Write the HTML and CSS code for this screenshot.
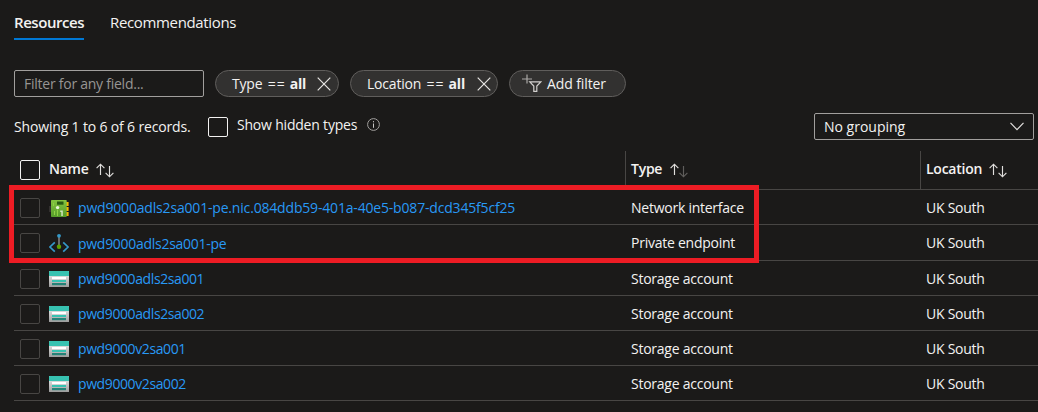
FILE: index.html
```html
<!DOCTYPE html>
<html lang="en">
<head>
<meta charset="utf-8">
<title>Resources</title>
<link rel="stylesheet" href="styles.css">
</head>
<body>
<svg class="defs" width="0" height="0">
  <defs>
    <linearGradient id="sheet" x1="0" y1="0" x2="0" y2="1"><stop offset="0" stop-color="#f4f4f4"/><stop offset="1" stop-color="#9d9d9d"/></linearGradient>
    <linearGradient id="board" x1="0" y1="0" x2="0" y2="1"><stop offset="0" stop-color="#84c440"/><stop offset="1" stop-color="#559c2a"/></linearGradient>
  </defs>
  <symbol id="storage" viewBox="0 0 20 20">
    <rect x="0" y="2" width="20" height="16" rx=".6" fill="url(#sheet)"/>
    <rect x="0" y="2" width="20" height="5" rx=".6" fill="#37c2b1"/>
    <rect x="3" y="8" width="14" height="2.2" fill="#fff"/>
    <rect x="3" y="11" width="14" height="2" fill="#37c2b1"/>
    <rect x="3" y="14" width="14" height="2.2" fill="#258277"/>
  </symbol>
  <symbol id="nic" viewBox="0 0 20 20">
    <path d="M0 8h2v6H0z" fill="#33302f"/>
    <path d="M17 4h2.6v4H17zM17 9h2.6v4H17zM17 14h2.6v4H17z" fill="#f5b800"/>
    <rect x="2" y="2" width="15.7" height="17" rx=".7" fill="url(#board)"/>
    <rect x="8" y="3.5" width="6.5" height="3.2" fill="#285b12"/>
    <path d="M4.5 5v3M8.5 12v6M5.5 13v4" stroke="#8fd045" stroke-width="1"/>
    <circle cx="8.6" cy="9.6" r="1.7" fill="#e9f4da"/>
    <path d="M11.2 12.6h2.6v5.4h-1.5v-4h-1.1z" fill="#d3e5c0"/>
  </symbol>
  <symbol id="endpoint" viewBox="0 0 20 20">
    <path d="M5.8 9.3.9 14l4.9 4.7M14.2 9.3l4.9 4.7-4.9 4.7" fill="none" stroke="#3499c9" stroke-width="1.7"/>
    <path d="M10 3v10" stroke="#8a8886" stroke-width="1.5"/>
    <circle cx="10" cy="2.8" r="1.9" fill="#3499c9"/>
    <circle cx="10" cy="13.8" r="2.2" fill="#5ea300"/>
  </symbol>
  <symbol id="close" viewBox="0 0 14 14"><path d="M.7.7l12.6 12.6M13.3.7.7 13.3" fill="none" stroke="#e8e6e4" stroke-width="1.2"/></symbol>
  <symbol id="up" viewBox="0 0 9 15"><path d="M4.5 12V1.2M.6 5.2 4.5 1.2l3.9 4" fill="none" stroke="currentColor" stroke-width="1.15"/></symbol>
  <symbol id="down" viewBox="0 0 9 15"><path d="M4.5 3v10.8M.6 9.8l3.9 4 3.9-4" fill="none" stroke="currentColor" stroke-width="1.15"/></symbol>
</svg>

<nav class="tabs">
  <a class="tab tab-active">Resources</a>
  <a class="tab">Recommendations</a>
</nav>

<div class="filters">
  <div class="search">Filter for any field...</div>
  <div class="pill pill-type"><span>Type <span class="op">==</span> <b>all</b></span><svg class="close"><use href="#close"/></svg></div>
  <div class="pill pill-location"><span>Location <span class="op">==</span> <b>all</b></span><svg class="close"><use href="#close"/></svg></div>
  <div class="pill pill-add">
    <svg class="add-icon" viewBox="0 0 21 19"><path d="M6 .5v9M1 5h10" fill="none" stroke="#aaa8a6" stroke-width="1.2"/><path d="M8.8 7.8h11.1L15.8 12v5.3h-3V12z" fill="none" stroke="#d2d0ce" stroke-width="1.2"/></svg>
    <span>Add filter</span>
  </div>
</div>

<div class="summary">
  <span class="count">Showing 1 to 6 of 6 records.</span>
  <span class="check check-hidden"></span>
  <span class="hidden-label">Show hidden types</span>
  <svg class="info" viewBox="0 0 13 13"><circle cx="6.5" cy="6.5" r="5.9" fill="none" stroke="#a19f9d"/><path d="M6.5 5.5v4.3M6.5 3.1v1.2" stroke="#c8c6c4"/></svg>
  <div class="grouping"><span>No grouping</span><svg class="chevron" viewBox="0 0 14 9"><path d="M.5.8 7 7.6 13.5.8" fill="none" stroke="#e1dfdd" stroke-width="1.2"/></svg></div>
</div>

<main class="grid">
  <div class="row head">
    <div class="cell name"><span class="check check-all"></span><span class="title">Name</span><span class="sort"><svg><use href="#up"/></svg><svg><use href="#down"/></svg></span></div>
    <div class="cell type"><span class="title">Type</span><span class="sort"><svg><use href="#up"/></svg><svg class="dim"><use href="#down"/></svg></span></div>
    <div class="cell location"><span class="title">Location</span><span class="sort"><svg><use href="#up"/></svg><svg><use href="#down"/></svg></span></div>
  </div>
  <div class="row">
    <div class="cell name"><span class="check"></span><svg class="icon raised"><use href="#nic"/></svg><a class="long">pwd9000adls2sa001-pe.nic.084ddb59-401a-40e5-b087-dcd345f5cf25</a></div>
    <div class="cell type">Network interface</div><div class="cell location">UK South</div>
  </div>
  <div class="row tall">
    <div class="cell name"><span class="check"></span><svg class="icon raised"><use href="#endpoint"/></svg><a class="medium">pwd9000adls2sa001-pe</a></div>
    <div class="cell type">Private endpoint</div><div class="cell location">UK South</div>
  </div>
  <div class="row">
    <div class="cell name"><span class="check"></span><svg class="icon raised"><use href="#storage"/></svg><a>pwd9000adls2sa001</a></div>
    <div class="cell type">Storage account</div><div class="cell location">UK South</div>
  </div>
  <div class="row">
    <div class="cell name"><span class="check"></span><svg class="icon"><use href="#storage"/></svg><a>pwd9000adls2sa002</a></div>
    <div class="cell type">Storage account</div><div class="cell location">UK South</div>
  </div>
  <div class="row">
    <div class="cell name"><span class="check"></span><svg class="icon"><use href="#storage"/></svg><a>pwd9000v2sa001</a></div>
    <div class="cell type">Storage account</div><div class="cell location">UK South</div>
  </div>
  <div class="row">
    <div class="cell name"><span class="check"></span><svg class="icon"><use href="#storage"/></svg><a>pwd9000v2sa002</a></div>
    <div class="cell type">Storage account</div><div class="cell location">UK South</div>
  </div>
  <div class="highlight"></div>
</main>
</body>
</html>
```
FILE: styles.css
```css
* { box-sizing: border-box; }
body {
  margin: 0;
  height: 412px;
  overflow: hidden;
  background: #1b1a19;
  color: #f3f2f1;
  font: 14px/20px "Open Sans", "Noto Sans", sans-serif;
  letter-spacing: -0.25px;
  white-space: nowrap;
}
.defs { display: block; }
svg { flex: none; }

.tabs { display: flex; gap: 26px; height: 70px; padding: 12px 0 0 14px; }
.tab { height: 28px; font-size: 15px; line-height: 21px; letter-spacing: -0.35px; }
.tab-active { width: 70px; font-weight: 600; letter-spacing: -0.45px; border-bottom: 2px solid #0078d4; }

.filters { display: flex; gap: 11px; height: 27px; padding-left: 14px; }
.search {
  width: 190px;
  padding: 0 9px;
  border: 1px solid #a19f9d;
  border-radius: 2px;
  color: #979593;
  line-height: 25px;
}
.pill {
  display: flex;
  align-items: center;
  justify-content: space-between;
  padding: 0 7px 0 16px;
  border: 1px solid #605e5c;
  border-radius: 14px;
  background: #323130;
  letter-spacing: -0.2px;
}
.pill b { font-weight: 700; }
.op { margin: 0 0.5px 0 2px; letter-spacing: 1px; }
.pill-type { width: 124px; }
.pill-location { width: 148px; padding-right: 6px; }
.pill-add { width: 117px; padding: 0 0 0 11px; justify-content: flex-start; gap: 5px; letter-spacing: -0.1px; }
.close { width: 14px; height: 14px; }
.add-icon { width: 21px; height: 19px; }

.summary { display: flex; height: 54px; padding: 16px 4px 0 14px; }
.count { width: 194px; padding-top: 4px; letter-spacing: -0.16px; }
.check { flex: none; width: 20px; height: 20px; border: 1px solid #484644; border-radius: 2px; }
.check-hidden { margin-top: 4px; border-color: #f3f2f1; }
.hidden-label { width: 130px; padding: 2px 0 0 9px; letter-spacing: -0.2px; }
.info { width: 13px; height: 13px; margin: 5px 0 0 9px; }
.grouping {
  display: flex;
  align-items: center;
  justify-content: space-between;
  width: 220px;
  height: 27px;
  margin-left: auto;
  padding: 0 9px;
  border: 1px solid #a19f9d;
  border-radius: 2px;
  letter-spacing: 0;
}
.chevron { width: 14px; height: 9px; }

.grid { position: relative; margin-left: 14px; }
.row { display: grid; grid-template-columns: 611px 295px 1fr; height: 35px; border-bottom: 1px solid #484644; }
.tall { height: 36px; }
.head { height: 39px; font-weight: 600; }
.cell { display: flex; align-items: center; padding-top: 1px; }
.name { padding-left: 6px; }
.type, .location { padding-left: 6px; }
.head .type, .head .location { padding-left: 5px; border-left: 1px solid #484644; }
.head .cell { padding-top: 0; }
.title { padding-bottom: 2px; }
.check-all { margin-right: 9px; border-color: #f3f2f1; }
.icon { width: 20px; height: 20px; margin: 1px 9px 0; }
.raised { margin-top: 0; }
.name a { color: #2899f5; letter-spacing: -0.4px; }
.name .medium { padding-top: 2px; letter-spacing: -0.28px; }
.name .long { letter-spacing: -0.18px; }
.sort { display: flex; margin-left: 7px; color: #e1dfdd; }
.type .sort { margin-left: 8px; }
.sort svg { width: 9px; height: 15px; }
.dim { color: #605e5c; }
.highlight {
  position: absolute;
  left: -5px;
  top: 34px;
  width: 750px;
  height: 78px;
  border: 5px solid #ed1c24;
}
```
